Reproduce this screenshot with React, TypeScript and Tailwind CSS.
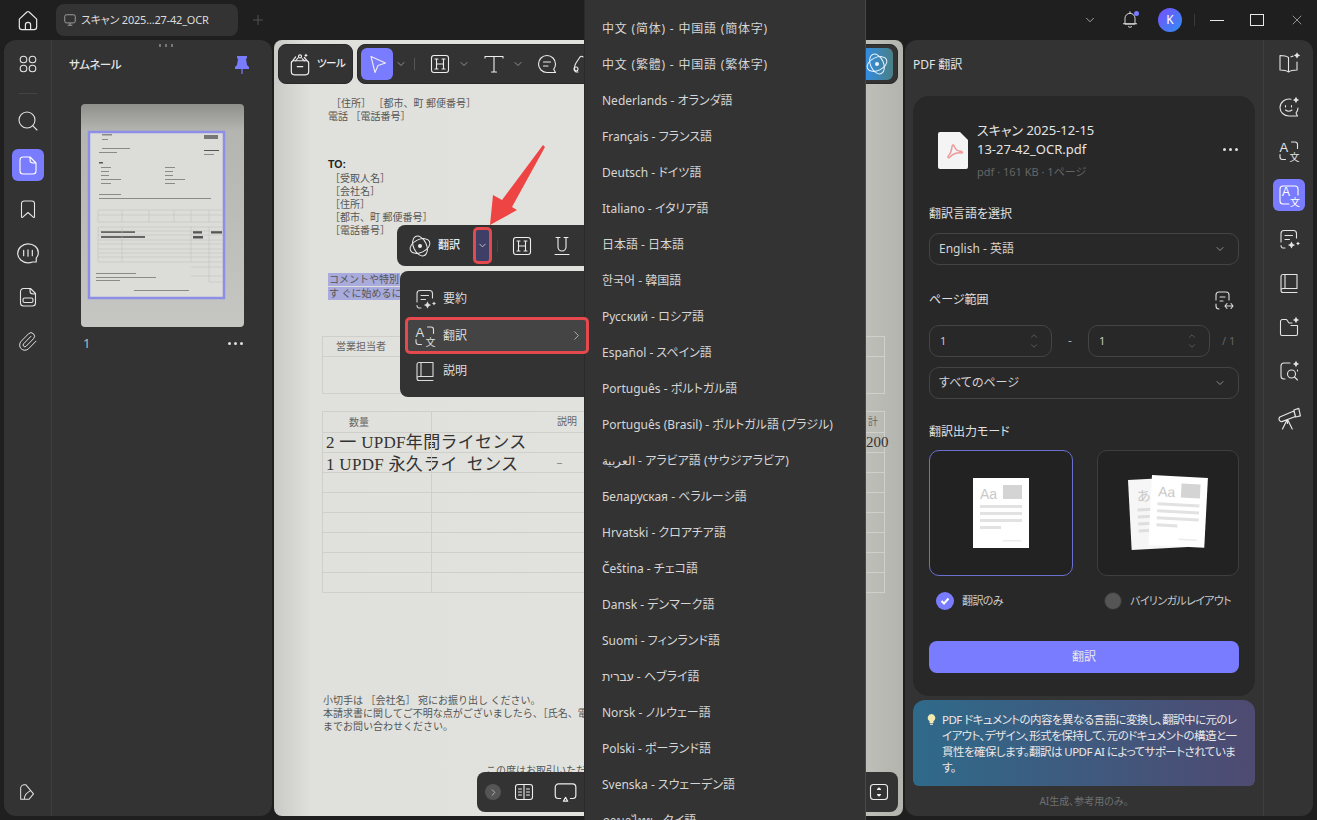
import type { ReactNode } from 'react';
import { ChevronDown, ChevronRight, ChevronUp, Paperclip, Plus, Search, X } from 'lucide-react';

const languages = [
  '中文 (简体) - 中国語 (簡体字)',
  '中文 (繁體) - 中国語 (繁体字)',
  'Nederlands - オランダ語',
  'Français - フランス語',
  'Deutsch - ドイツ語',
  'Italiano - イタリア語',
  '日本語 - 日本語',
  '한국어 - 韓国語',
  'Русский - ロシア語',
  'Español - スペイン語',
  'Português - ポルトガル語',
  'Português (Brasil) - ポルトガル語 (ブラジル)',
  'العربية - アラビア語 (サウジアラビア)',
  'Беларуская - ベラルーシ語',
  'Hrvatski - クロアチア語',
  'Čeština - チェコ語',
  'Dansk - デンマーク語',
  'Suomi - フィンランド語',
  'עברית - ヘブライ語',
  'Norsk - ノルウェー語',
  'Polski - ポーランド語',
  'Svenska - スウェーデン語',
  'ภาษาไทย - タイ語',
];

const Ic = ({ children, s = 24, className }: { children: ReactNode; s?: number; className?: string }) => (
  <svg width={s} height={s} viewBox="0 0 24 24" fill="none" stroke="currentColor" strokeWidth={1.1} strokeLinecap="round" strokeLinejoin="round" className={className}>
    {children}
  </svg>
);

const Spark = ({ x, y, r = 3 }: { x: number; y: number; r?: number }) => (
  <path d={`M${x} ${y - r}Q${x + r * 0.2} ${y - r * 0.2} ${x + r} ${y}Q${x + r * 0.2} ${y + r * 0.2} ${x} ${y + r}Q${x - r * 0.2} ${y + r * 0.2} ${x - r} ${y}Q${x - r * 0.2} ${y - r * 0.2} ${x} ${y - r}Z`} fill="currentColor" stroke="none" />
);

const HomeIcon = () => <Ic s={26}><path d="M4 11.2 11 4.6a1.5 1.5 0 0 1 2 0l7 6.6v7.3a2.4 2.4 0 0 1-2.4 2.4H6.4A2.4 2.4 0 0 1 4 18.5ZM9.6 20.9v-4.3a2.4 2.4 0 0 1 4.8 0v4.3" /></Ic>;
const GridIcon = () => <Ic><circle cx="7.5" cy="7.5" r="3.3" /><circle cx="16.5" cy="7.5" r="3.3" /><circle cx="7.5" cy="16.5" r="3.3" /><circle cx="16.5" cy="16.5" r="3.3" /></Ic>;
const PageIcon = () => <Ic><path d="M7 4h7l6 6v8a3 3 0 0 1-3 3H7a3 3 0 0 1-3-3V7a3 3 0 0 1 3-3ZM14 4v3a3 3 0 0 0 3 3h3" /></Ic>;
const BookmarkIcon = () => <Ic><path d="M5.5 6.5A2.5 2.5 0 0 1 8 4h8a2.5 2.5 0 0 1 2.5 2.5V20a.6.6 0 0 1-1 .4L12 15.5l-5.5 4.9a.6.6 0 0 1-1-.4Z" /></Ic>;
const ChatBarsIcon = () => <Ic s={26}><path d="M12 3.5c5.2 0 9.5 3.5 9.5 8.2 0 1.9-.7 3.7-1.9 5v3.6h-3.4a11 11 0 0 1-4.2.8c-5.2 0-9.5-4-9.5-8.7S6.8 3.5 12 3.5Z" /><path d="M8 9.5v5M12 9v6M16 9.5v5" /></Ic>;
const FilePillIcon = () => <Ic><path d="M7.5 3.5h7l5 5V18a3 3 0 0 1-3 3H7.500a3 3 0 0 1-3-3V6.500a3 3 0 0 1 3-3ZM14 3.500V6a3 3 0 0 0 3 3h2.500" /><rect x="7" y="13" width="10" height="4.500" rx="1.500" /></Ic>;
const TuneIcon = () => <Ic><path d="M4 12V7a3 3 0 0 1 3-3h7a3 3 0 0 1 3 3v5M4 16v2a3 3 0 0 0 3 3M8 9h5M8 13h3" /><path d="M13 18h8M15 15.500 13 18l2 2.500M19 15.500l2 2.500-2 2.500" /></Ic>;

const TranslateIcon = ({ s = 24 }: { s?: number }) => (
  <svg width={s} height={s} viewBox="0 0 24 24" fill="none" stroke="currentColor" strokeWidth={1.1} strokeLinecap="round">
    <text x="2.5" y="12.5" fontSize="13" fill="currentColor" stroke="none" fontFamily="Liberation Sans">A</text>
    <text x="12.5" y="22" fontSize="10" fill="currentColor" stroke="none" fontFamily="Noto Sans CJK JP">文</text>
    <path d="M14.5 3H18a2.5 2.5 0 0 1 2.5 2.500v4M3 15.500V18a2.500 2.500 0 0 0 2.500 2.500h3" />
  </svg>
);
const TranslateBoxIcon = () => (
  <svg width="24" height="24" viewBox="0 0 24 24" fill="none" stroke="currentColor" strokeWidth={1.1} strokeLinecap="round">
    <text x="5" y="13" fontSize="12" fill="currentColor" stroke="none" fontFamily="Liberation Sans">A</text>
    <text x="13" y="22.5" fontSize="10" fill="currentColor" stroke="none" fontFamily="Noto Sans CJK JP">文</text>
    <path d="M12 21H6a3 3 0 0 1-3-3V6a3 3 0 0 1 3-3h12a3 3 0 0 1 3 3v6" />
  </svg>
);
const SummaryIcon = () => <Ic><path d="M4 15V6.500A3 3 0 0 1 7 3.500h9.500a3 3 0 0 1 3 3V11M4 18.500A2.500 2.500 0 0 0 6.500 21H8M8 8.500h7.500M8 12.500h4.500" /><Spark x={14.5} y={18} r={3.6} /><Spark x={21} y={16.5} r={2} /></Ic>;
const BookIcon = () => <Ic><path d="M4 5.500A2 2 0 0 1 6 3.500h14v14H6a2 2 0 0 0-2 2ZM4 19.500a2 2 0 0 0 2 2h14M8 3.500v14" /></Ic>;
const ReadSparkIcon = () => <Ic><path d="M11.5 6.500C9.500 5 6.500 4.500 3 4.500V19c3.500 0 6.500.5 8.500 2 2-1.500 5-2 8.500-2v-8M11.500 6.500V21M14 5.800c.6-.3 1.300-.5 2-.7" /><Spark x={20} y={4.5} r={3.2} /></Ic>;
const ChatSmileIcon = () => <Ic><path d="M14 4.200A9 9 0 0 0 3 12.500C3 17.200 7 21 12 21h8.500L19 18a8 8 0 0 0 2-5" /><path d="M8.500 10.500V12M14.500 10.500V12M8.500 15c2 1.500 4.500 1.500 6.500 0" /><Spark x={19} y={5} r={3.2} /></Ic>;
const FolderSparkIcon = () => <Ic><path d="M3.500 10.500v-4a2 2 0 0 1 2-2h4L12 8h3M3.500 10.500V19A1.500 1.500 0 0 0 5 20.500h14a1.500 1.500 0 0 0 1.500-1.500v-8.500H14" /><Spark x={19} y={5} r={3.2} /></Ic>;
const SearchSparkIcon = () => <Ic><path d="M13 4H7a3 3 0 0 0-3 3v10a3 3 0 0 0 3 3h1M20.500 11v1" /><circle cx="14.5" cy="15" r="4" /><path d="m17.500 18 3 3" /><Spark x={19} y={5} r={3.2} /></Ic>;
const TelescopeIcon = () => <Ic s={26} className="translate-y-[2px]"><path d="M3.500 12 16.500 6.500l1.500 5L6 16a2.400 2.400 0 0 1-2.500-4ZM16.500 5.500l4.500-1.500 1.500 7-4.500 1ZM10 15l-4 8M11 15l4 8M10.500 15v3" /></Ic>;
const CursorIcon = () => <Ic><path d="M6 4.500 20.500 11 13 13.500 10 20.500Z" /></Ic>;
const HBoxIcon = () => <Ic><rect x="3.500" y="3.500" width="17" height="17" rx="2.500" /><path d="M7 7h3M14 7h3M7 17h3M14 17h3M8.500 7v10M15.500 7v10M8.500 12h7" /></Ic>;
const TIcon = () => <Ic><path d="M3 6V4.500h18V6M12 4.500V20M9.500 20h5" /></Ic>;
const UIcon = () => <Ic><path d="M6 3.500h4M14 3.500h4M8 3.500V13a4 4 0 0 0 8 0V3.500M5 20.500h14" /></Ic>;
const BubbleIcon = () => <Ic><path d="M20.500 20.500H12a8.500 8.500 0 1 1 8.500-8.500c0 2-.7 3.800-1.800 5.200ZM8.500 10h7M8.500 14h4.500" /></Ic>;
const LassoIcon = () => <Ic><path d="M5 20c-2-2-2-6 0-9l4-6c1-1 2-1 3 0M5 20h2" /><circle cx="5" cy="17" r="2" /></Ic>;
const ToolsIcon = () => <Ic s={26}><path d="M4 11a2 2 0 0 1 2-2h12a2 2 0 0 1 2 2v8a3 3 0 0 1-3 3H7a3 3 0 0 1-3-3ZM9.500 14.500h5M4.500 10 8 5.500M19.500 10 16 6" /><circle cx="12" cy="5" r="1.4" /><Spark x={17.5} y={4} r={1.8} /><path d="m8 9 2-2.500M14 7l2 2" /></Ic>;
const OrbitIcon = ({ s = 24 }: { s?: number }) => (
  <svg width={s} height={s} viewBox="0 0 24 24" fill="none" stroke="currentColor" strokeWidth={1}>
    <ellipse cx="12" cy="12" rx="10.500" ry="6.500" transform="rotate(-25 12 12)" />
    <ellipse cx="12" cy="12" rx="6.500" ry="10.500" transform="rotate(-25 12 12)" />
    <circle cx="12" cy="12" r="2" fill="currentColor" stroke="none" />
  </svg>
);
const SplitBookIcon = () => <Ic><rect x="3.500" y="4.500" width="17" height="15" rx="2.500" /><path d="M12 4.500v15M6.500 9h3M6.500 12h3M6.500 15h3M14.500 9h3M14.500 12h3M14.500 15h3" /></Ic>;
const MonitorIcon = () => <Ic s={26}><path d="M8 18H6a3 3 0 0 1-3-3V7.500a3 3 0 0 1 3-3h13a3 3 0 0 1 3 3V15a3 3 0 0 1-3 3h-2" /><path d="m12.500 17 2 3.500h-4Z" /></Ic>;
const FitIcon = () => <Ic><rect x="3.500" y="4.500" width="17" height="15" rx="3" /><path d="M10.500 9.500 12 8l1.500 1.500ZM10.500 14.500 12 16l1.500-1.500Z" fill="currentColor" /></Ic>;

const Dots = ({ className = '' }: { className?: string }) => (
  <div className={`flex gap-[3px] ${className}`}>
    <span className="h-[3px] w-[3px] rounded-full bg-[#e0e0e0]" />
    <span className="h-[3px] w-[3px] rounded-full bg-[#e0e0e0]" />
    <span className="h-[3px] w-[3px] rounded-full bg-[#e0e0e0]" />
  </div>
);

const Chev = () => <ChevronDown size={12} strokeWidth={1.5} className="text-[#b0b0b0]" />;

const RailBtn = ({ children, active }: { children: ReactNode; active?: boolean }) => (
  <div className={`flex h-8 w-8 items-center justify-center rounded-md ${active ? 'bg-[#7a7cff] text-white' : 'text-[#e4e4e4]'}`}>{children}</div>
);

const Stepper = ({ className }: { className: string }) => (
  <div className={`flex h-8 items-center justify-between rounded-[10px] border border-[#444] pl-[10px] pr-3 text-[11px] text-[#c8c8c8] ${className}`}>
    <span>1</span>
    <div className="flex flex-col text-[#777]">
      <ChevronUp size={10} strokeWidth={1.5} />
      <ChevronDown size={10} strokeWidth={1.5} />
    </div>
  </div>
);

const SelectBox = ({ label }: { label: string }) => (
  <div className="flex h-8 items-center justify-between rounded-[10px] border border-[#444] pl-[9px] pr-3 text-[12px] text-[#d4d4d4]">
    <span>{label}</span>
    <Chev />
  </div>
);

const Thumbnail = () => (
  <svg width="163" height="223" viewBox="0 0 163 223" className="rounded-sm">
    <defs>
      <linearGradient id="paper" x1="0" y1="0" x2="0" y2="1">
        <stop offset="0" stopColor="#8f8f8c" />
        <stop offset="0.12" stopColor="#b4b5b0" />
        <stop offset="1" stopColor="#c6c7c2" />
      </linearGradient>
    </defs>
    <rect width="163" height="223" rx="2" fill="url(#paper)" />
    <rect x="8" y="28" width="135" height="166" fill="#dcddd8" stroke="#8d8fe6" strokeWidth="2.5" />
    <g fill="#8a8a88">
      <rect x="21" y="30" width="10" height="1.500" /><rect x="21" y="35" width="6" height="1" />
      <rect x="21" y="44" width="28" height="1" /><rect x="18" y="48" width="18" height="1" />
      <rect x="123" y="31" width="14" height="4" fill="#777" />
      <rect x="123" y="46" width="15" height="1" fill="#555" /><rect x="123" y="50" width="10" height="1" />
      <rect x="18" y="58" width="4" height="1.500" fill="#555" />
      <rect x="20" y="63" width="10" height="1" /><rect x="20" y="67" width="8" height="1" /><rect x="20" y="71" width="8" height="1" /><rect x="20" y="75" width="20" height="1" /><rect x="20" y="79" width="10" height="1" />
      <rect x="84" y="63" width="10" height="1" /><rect x="84" y="67" width="8" height="1" /><rect x="84" y="71" width="8" height="1" /><rect x="84" y="75" width="20" height="1" /><rect x="84" y="79" width="10" height="1" />
      <rect x="18" y="90" width="22" height="1" /><rect x="18" y="94" width="112" height="1" />
      <rect x="20" y="127" width="34" height="2" fill="#666" /><rect x="20" y="132" width="44" height="2" fill="#666" />
      <rect x="112" y="127" width="9" height="2.500" fill="#555" /><rect x="130" y="127" width="11" height="2.500" fill="#555" /><rect x="112" y="132" width="10" height="2.500" fill="#555" />
      <rect x="15" y="169" width="40" height="1" /><rect x="15" y="173" width="60" height="1" /><rect x="15" y="176" width="24" height="1" />
      <rect x="53" y="186" width="55" height="1" />
    </g>
    <g stroke="#bcbdb8" strokeWidth="0.5" fill="none">
      <path d="M17 106h125M17 111h125M17 118h125M17 106v12M41 106v12M68 106v12M93 106v12M110 106v12M128 106v12" />
      <path d="M17 123h125M17 127h125M17 131h125M17 136h125M17 140h125M17 145h125M17 149h125M17 153h125M17 158h125M17 123v35M41 123v35M110 123v35M128 123v55M110 163h32M110 172h32M128 178h14" />
    </g>
  </svg>
);

const SinglePage = () => (
  <svg width="56" height="70" viewBox="0 0 56 70">
    <rect width="56" height="70" fill="#fff" />
    <text x="7" y="21" fontSize="14" fill="#c9c9c9" fontFamily="Liberation Sans">Aa</text>
    <rect x="30" y="7" width="19" height="14" fill="#d4d4d4" />
    <rect x="7" y="27" width="42" height="3" fill="#e2e2e2" /><rect x="7" y="34" width="42" height="3" fill="#e2e2e2" /><rect x="7" y="41" width="42" height="3" fill="#e2e2e2" /><rect x="7" y="48" width="21" height="3" fill="#e2e2e2" />
    <rect x="30" y="62" width="18" height="1.500" fill="#ececec" />
  </svg>
);

const DoublePage = () => (
  <svg width="84" height="78" viewBox="0 0 84 78">
    <g transform="translate(2 6) rotate(-3)">
      <rect width="56" height="70" fill="#f6f6f6" />
      <text x="8" y="22" fontSize="14" fill="#c9c9c9" fontFamily="Noto Sans CJK JP">あ</text>
      <rect x="8" y="29" width="24" height="3" fill="#dedede" /><rect x="8" y="36" width="24" height="3" fill="#dedede" /><rect x="8" y="43" width="24" height="3" fill="#dedede" /><rect x="8" y="50" width="14" height="3" fill="#dedede" />
    </g>
    <g transform="translate(26 1) rotate(3)">
      <rect width="56" height="70" fill="#fff" />
      <text x="7" y="21" fontSize="14" fill="#c9c9c9" fontFamily="Liberation Sans">Aa</text>
      <rect x="30" y="7" width="19" height="14" fill="#d4d4d4" />
      <rect x="7" y="27" width="42" height="3" fill="#e2e2e2" /><rect x="7" y="34" width="42" height="3" fill="#e2e2e2" /><rect x="7" y="41" width="42" height="3" fill="#e2e2e2" /><rect x="7" y="48" width="21" height="3" fill="#e2e2e2" />
      <rect x="30" y="62" width="18" height="1.500" fill="#ececec" />
    </g>
  </svg>
);

const tableRows = [0, 1, 2, 3, 4, 5];

const Page = () => (
  <div className="h-full overflow-hidden rounded-lg bg-[linear-gradient(90deg,#c9cac5_0%,#e0e1dc_6%,#e2e3de_80%,#bdbdb8_95%,#b4b4af_100%)] pl-[54px] pt-[57px] font-['Liberation_Serif','Noto_Sans_CJK_JP',serif] text-[10px] leading-[13px] text-[#555] [font-feature-settings:normal]">
    <div className="pl-[3px]">［住所］ ［都市、町 郵便番号］</div>
    <div>電話 ［電話番号］</div>
    <div className="mt-[35px] font-['Liberation_Sans'] text-[10.5px] font-bold text-[#222]">TO:</div>
    <div className="mt-[1px] pl-[2px]">
      <div>［受取人名］</div>
      <div>［会社名］</div>
      <div>［住所］</div>
      <div>［都市、町 郵便番号］</div>
      <div>［電話番号］</div>
    </div>
    <div className="mt-[36px] w-[72px] whitespace-nowrap bg-[#a9abdc] pl-[1px]">コメントや特別</div>
    <div className="mt-[1px] w-[72px] whitespace-nowrap bg-[#a9abdc] pl-[1px]">す ぐに始めるに</div>

    <div className="-ml-[6px] mt-[36px] w-[563px] border border-[#cfd0cb]">
      <div className="grid h-[20px] grid-cols-[108px_117px_113px_82px_79px_64px] items-center border-b border-[#cfd0cb]">
        <div className="pl-[13px] text-[#666]">営業担当者</div>
        <div className="h-full border-l border-[#cfd0cb]" />
        <div className="h-full border-l border-[#cfd0cb]" />
        <div className="h-full border-l border-[#cfd0cb]" />
        <div className="h-full border-l border-[#cfd0cb]" />
        <div className="h-full border-l border-[#cfd0cb]" />
      </div>
      <div className="h-[36px]" />
    </div>

    <div className="-ml-[6px] mt-[17px] w-[563px] border-x border-t border-[#cfd0cb]">
      <div className="grid h-[21px] grid-cols-[108px_135px_174px_81px_64px] items-center border-b border-[#cfd0cb]">
        <div className="pl-[26px] text-[#666]">数量</div>
        <div className="h-full whitespace-nowrap border-l border-[#cfd0cb] pl-[125px] pt-[3px] text-[#666]">説明</div>
        <div className="h-full" />
        <div className="h-full border-l border-[#cfd0cb]" />
        <div className="h-full border-l border-[#cfd0cb] pl-[46px] pt-[3px] text-[#666]">計</div>
      </div>
      <div className="grid h-[20px] grid-cols-[108px_309px_81px_64px] items-center border-b border-[#cfd0cb]">
        <div className="whitespace-nowrap pl-[3px] text-[17px] tracking-[0.3px] text-[#333]">2 一 UPDF年間ライセンス</div>
        <div className="h-full border-l border-[#cfd0cb]" />
        <div className="h-full border-l border-[#cfd0cb]" />
        <div className="h-full border-l border-[#cfd0cb] pl-[44px] pt-[3px] text-[15px] text-[#333]">200</div>
      </div>
      <div className="grid h-[20px] grid-cols-[108px_309px_81px_64px] items-center border-b border-[#cfd0cb]">
        <div className="whitespace-nowrap pl-[3px] pt-[3px] text-[17px] tracking-[0.3px] text-[#333]">1 UPDF 永久ライ &nbsp;センス</div>
        <div className="h-full border-l border-[#cfd0cb] pl-[125px] pt-[3px] text-[#555]">–</div>
        <div className="h-full border-l border-[#cfd0cb]" />
        <div className="h-full border-l border-[#cfd0cb]" />
      </div>
      {tableRows.map((r) => (
        <div key={r} className="grid h-[20px] grid-cols-[108px_309px_81px_64px] border-b border-[#cfd0cb]">
          <div />
          <div className="border-l border-[#cfd0cb]" />
          <div className="border-l border-[#cfd0cb]" />
          <div className="border-l border-[#cfd0cb]" />
        </div>
      ))}
    </div>

    <div className="-ml-[5px] mt-[101px]">
      <div className="whitespace-nowrap">小切手は ［会社名］ 宛にお振り出し ください。</div>
      <div className="whitespace-nowrap">本請求書に関してご不明な点がございましたら、［氏名、電</div>
      <div className="whitespace-nowrap">までお問い合わせください。</div>
    </div>
    <div className="mt-[31px] whitespace-nowrap pl-[158px]">この度はお取引いただ</div>
  </div>
);

export default function App() {
  return (
    <div className="relative h-[820px] w-[1317px] overflow-hidden bg-[#1f1f1f] font-['Noto_Sans','Noto_Sans_CJK_JP',sans-serif] text-[#e0e0e0] [font-feature-settings:'palt']">
      {/* title bar */}
      <div className="flex h-10 items-center">
        <div className="ml-[15px] text-[#e8e8e8]"><HomeIcon /></div>
        <div className="ml-[15px] flex h-8 w-[182px] items-center rounded-lg bg-[#333] pl-[7px] text-[11px] tracking-[-0.2px] text-[#dcdcdc]">
          <svg width="14" height="14" viewBox="0 0 24 24" fill="none" stroke="#aaa" strokeWidth="1.5" className="mr-[4px]"><rect x="3" y="3" width="18" height="14" rx="3" /><path d="M12 17v4M8 21h8" /></svg>
          スキャン 2025...27-42_OCR
        </div>
        <Plus size={16} strokeWidth={1} className="ml-[12px] text-[#6a6a6a]" />
        <div className="ml-auto flex items-center">
          <ChevronDown size={14} strokeWidth={1.2} className="text-[#ddd]" />
          <div className="relative ml-[23px] text-[#e8e8e8]">
            <Ic s={20}><path d="M6 16.500V10a6 6 0 0 1 12 0v6.500ZM4 16.500h16M10 20c1 1 3 1 4 0M12 2v2" /></Ic>
            <span className="absolute right-[1px] top-[1px] h-[5px] w-[5px] rounded-full bg-[#7a7cff]" />
          </div>
          <div className="ml-[18px] flex h-6 w-6 items-center justify-center rounded-full bg-[linear-gradient(135deg,#7a4dff,#2f8ff0)] text-[12px] text-white">K</div>
          <span className="ml-[12px] h-3 w-px bg-[#3a3a3a]" />
          <span className="ml-[15px] h-px w-[14px] bg-[#e8e8e8]" />
          <span className="ml-[26px] h-[12px] w-[14px] border border-[#e8e8e8]" />
          <X size={16} strokeWidth={1} className="ml-[25px] mr-[12px] text-[#ccc]" />
        </div>
      </div>

      {/* main */}
      <div className="flex h-[776px] gap-[2px] px-1">
        <div className="flex w-[268px] rounded-xl bg-[#333]">
          <div className="flex w-[48px] flex-col items-center border-r border-[#3e3e3e] pt-[8px]">
            <RailBtn><GridIcon /></RailBtn>
            <span className="mb-[11px] mt-[13px] h-px w-[18px] bg-[#444]" />
            <div className="flex flex-col gap-3 text-[#e4e4e4]">
              <RailBtn><Search size={24} strokeWidth={1.1} /></RailBtn>
              <RailBtn active><PageIcon /></RailBtn>
              <RailBtn><BookmarkIcon /></RailBtn>
              <RailBtn><ChatBarsIcon /></RailBtn>
              <RailBtn><FilePillIcon /></RailBtn>
              <RailBtn><Paperclip size={21} strokeWidth={1.1} /></RailBtn>
            </div>
            <div className="mb-[8px] mt-auto">
              <RailBtn>
                <Ic s={22}><path d="M4 20V8a4 4 0 0 1 4-4h1.500L18 14l-5 6H4ZM8 20c0-4 2-7 6-9" /></Ic>
              </RailBtn>
            </div>
          </div>
          <div className="relative flex-1">
            <div className="absolute left-[107px] top-[4px] flex gap-[4px]">
              <span className="h-[3px] w-[2px] bg-[#777]" /><span className="h-[3px] w-[2px] bg-[#777]" /><span className="h-[3px] w-[2px] bg-[#777]" />
            </div>
            <div className="flex items-center justify-between pl-[17px] pr-[22px] pt-[15px] text-[11.5px] font-medium tracking-[-0.5px] text-[#e4e4e4]">
              <span>サムネール</span>
              <svg width="16" height="20" viewBox="0 0 16 20" fill="#7a7cff">
                <path d="M3 1h10v2l-1 1 1 6 2 2v2H1v-2l2-2 1-6-1-1Z" />
                <rect x="7.4" y="13" width="1.2" height="6" />
              </svg>
            </div>
            <div className="ml-[29px] mt-[29px]"><Thumbnail /></div>
            <div className="ml-[31px] mr-[29px] mt-[7px] flex items-center justify-between text-[13px] text-[#bbb]">
              <span>1</span>
              <Dots />
            </div>
          </div>
        </div>

        <div className="w-[629px]"><Page /></div>

        <div className="flex w-[408px] rounded-xl bg-[#333]">
          <div className="w-[359px] border-r border-[#3e3e3e] px-2">
            <div className="h-[56px] pt-[16px] text-[12px] text-[#e4e4e4]">PDF 翻訳</div>
            <div className="h-[600px] rounded-2xl bg-[#282828] px-4">
              <div className="flex items-start pl-[9px] pt-[25px]">
                <svg width="30" height="37" viewBox="0 0 30 37" className="mt-[11px]">
                  <path d="M2 0h20l8 8v27a2 2 0 0 1-2 2H2a2 2 0 0 1-2-2V2a2 2 0 0 1 2-2Z" fill="#f4f4f4" />
                  <path d="M15 13c-2 0 0 6-4 10-2 2-1 4 1 2 2-3 8-5 11-4 3 0 1-2-2-2-4 0-5-7-6-6Z" fill="none" stroke="#ee9a9a" strokeWidth="1.5" />
                </svg>
                <div className="ml-[9px] flex-1">
                  <div className="text-[13px] leading-[19px] text-[#e4e4e4]">スキャン 2025-12-15<br />13-27-42_OCR.pdf</div>
                  <div className="mt-[5px] text-[11px] leading-[15px] text-[#666]">pdf · 161 KB · 1ページ</div>
                </div>
                <Dots className="mr-[1px] mt-[27px]" />
              </div>
              <div className="mt-[27px] text-[12px] leading-[16px] text-[#e0e0e0]">翻訳言語を選択</div>
              <div className="mt-[11px]"><SelectBox label="English - 英語" /></div>
              <div className="mt-[23px] flex items-center justify-between pr-[3px] text-[12px] leading-[20px] text-[#e0e0e0]">
                <span>ページ範囲</span>
                <TuneIconSmall />
              </div>
              <div className="mt-[13px] flex items-center">
                <Stepper className="w-[123px]" />
                <span className="w-[36px] text-center text-[12px] text-[#aaa]">-</span>
                <Stepper className="w-[122px]" />
                <span className="ml-[12px] text-[11px] text-[#666]">/ 1</span>
              </div>
              <div className="mt-[10px]"><SelectBox label="すべてのページ" /></div>
              <div className="mt-[23px] text-[12px] leading-[20px] text-[#e0e0e0]">翻訳出力モード</div>
              <div className="mt-[8px] flex gap-[24px]">
                <div className="flex h-[126px] w-[144px] items-center justify-center rounded-[10px] border border-[#6a6fd0] bg-[#222]"><SinglePage /></div>
                <div className="flex h-[126px] w-[143px] items-center justify-center rounded-[10px] border border-[#3e3e3e] bg-[#222]"><DoublePage /></div>
              </div>
              <div className="mt-[16px] flex h-[18px] items-center whitespace-nowrap text-[11px] tracking-[-0.6px] text-[#c8c8c8]">
                <div className="ml-[7px] flex h-[18px] w-[18px] shrink-0 items-center justify-center rounded-full bg-[#7a7cff]">
                  <svg width="12" height="12" viewBox="0 0 12 12" fill="none" stroke="#fff" strokeWidth="2"><path d="m2.5 6 2.500 2.500 4.500-5" /></svg>
                </div>
                <span className="ml-[8px] w-[48px]">翻訳のみ</span>
                <div className="ml-[94px] h-[18px] w-[18px] shrink-0 rounded-full border border-[#333] bg-[#555]" />
                <span className="ml-[8px]">バイリンガルレイアウト</span>
              </div>
              <div className="mt-[31px] flex h-8 items-center justify-center rounded-lg bg-[#7a7cff] text-[12px] text-[#e8e8e8]">翻訳</div>
            </div>
            <div className="mt-[4px] flex h-[86px] rounded-b-md rounded-t-xl bg-[linear-gradient(90deg,#2f6a8a,#4f4a72)] pl-[14px] pt-[12px] text-[11.5px] leading-[16px] tracking-[-0.55px] text-[#e8e8e8]">
              <svg width="9" height="14" viewBox="0 0 9 14" className="mr-[6px] mt-[1px] shrink-0">
                <path d="M4.5 1a3.800 3.800 0 0 0-2 7v2h4V8a3.800 3.800 0 0 0-2-7Z" fill="#f2e9b0" />
                <rect x="3" y="10.5" width="3" height="1.5" fill="#ccc" />
              </svg>
              <p className="whitespace-nowrap">PDF ドキュメントの内容を異なる言語に変換し、翻訳中に元のレ<br />イアウト、デザイン、形式を保持して、元のドキュメントの構造と一<br />貫性を確保します。翻訳は UPDF AI によってサポートされていま<br />す。</p>
            </div>
            <div className="mt-[8px] text-center text-[10px] leading-[14px] text-[#707070]">AI生成、参考用のみ。</div>
          </div>
          <div className="flex flex-1 flex-col items-center gap-3 pt-[7px]">
            <RailBtn><ReadSparkIcon /></RailBtn>
            <RailBtn><ChatSmileIcon /></RailBtn>
            <RailBtn><TranslateIcon /></RailBtn>
            <RailBtn active><TranslateBoxIcon /></RailBtn>
            <RailBtn><SummaryIcon /></RailBtn>
            <RailBtn><BookIcon /></RailBtn>
            <RailBtn><FolderSparkIcon /></RailBtn>
            <RailBtn><SearchSparkIcon /></RailBtn>
            <RailBtn><TelescopeIcon /></RailBtn>
          </div>
        </div>
      </div>

      {/* floating toolbars over the page */}
      <div className="absolute left-[278px] top-[44px] flex h-10 w-[75px] items-center rounded-lg border border-[#2a2a2a] bg-[#333] pl-[8px] text-[10.5px] font-medium tracking-[-0.5px] text-[#eee]">
        <ToolsIcon />
        <span className="ml-[4px]">ツール</span>
      </div>
      <div className="absolute left-[357px] top-[44px] flex h-10 w-[541px] items-center rounded-lg border border-[#2a2a2a] bg-[#333] pl-[3px] text-[#eee]">
        <div className="flex h-8 w-8 items-center justify-center rounded-md bg-[#7a7cff]"><CursorIcon /></div>
        <div className="ml-[2px]"><Chev /></div>
        <span className="ml-[7px] h-3 w-px bg-[#555]" />
        <div className="ml-[13px]"><HBoxIcon /></div>
        <div className="ml-[6px]"><Chev /></div>
        <div className="ml-[12px]"><TIcon /></div>
        <div className="ml-[6px]"><Chev /></div>
        <div className="ml-[11px]"><BubbleIcon /></div>
        <div className="ml-[12px]"><LassoIcon /></div>
        <div className="ml-auto mr-[4px] flex h-8 w-8 items-center justify-center rounded-md bg-[linear-gradient(90deg,#2f8ff0,#4a7f85)] text-[#e8f4ff]"><OrbitIcon /></div>
      </div>
      <div className="absolute left-[477px] top-[772px] flex h-10 w-[421px] items-center rounded-lg bg-[#333] pl-[8px] text-[#eee]">
        <div className="flex h-4 w-4 items-center justify-center rounded-full bg-[#555] text-[#bbb]"><ChevronRight size={11} /></div>
        <div className="ml-[11px]"><SplitBookIcon /></div>
        <div className="ml-[16px]"><MonitorIcon /></div>
        <div className="ml-auto mr-[7px]"><FitIcon /></div>
      </div>

      {/* selection toolbar + menu */}
      <div className="absolute left-[397px] top-[225px] flex h-[41px] w-[200px] items-center rounded-lg bg-[#333] pl-[11px] text-[11px] font-medium text-[#eee]">
        <OrbitIcon />
        <span className="ml-[6px]">翻訳</span>
        <div className="ml-[13px] flex h-[37px] w-[19px] items-center justify-center rounded-[5px] border-[3px] border-[#e5484d] bg-[#3d3f66] text-[#ccc]"><ChevronDown size={11} /></div>
        <span className="ml-[5px] h-3 w-px bg-[#444]" />
        <div className="ml-[12px]"><HBoxIcon /></div>
        <div className="ml-[16px]"><UIcon /></div>
      </div>
      <div className="absolute left-[400px] top-[271px] flex h-[126px] w-[200px] flex-col justify-center rounded-lg bg-[#333] pt-[1px] text-[12px] text-[#ddd]">
        <div className="flex h-9 items-center gap-[6px] pl-[13px]"><SummaryIcon /><span>要約</span></div>
        <div className="h-9" />
        <div className="flex h-9 items-center gap-[6px] pl-[13px]"><BookIcon /><span>説明</span></div>
      </div>

      {/* language list */}
      <div className="absolute left-[585px] top-0 h-[820px] w-[281px] overflow-hidden border-r border-[#484848] bg-[#333] pt-[11px] text-[12px] text-[#d6d6d6] shadow-[-1px_0_0_#2a2a2a]">
        {languages.map((l, i) => (
          <div key={l} dir="ltr" className={`flex h-9 items-center whitespace-nowrap pl-[17px] ${i < 2 ? 'tracking-[0.8px]' : ''}`}>{l}</div>
        ))}
      </div>

      {/* annotations */}
      <div className="absolute left-[405px] top-[317px] flex h-[37px] w-[184px] items-center justify-between rounded-[5px] border-[3px] border-[#e5484d] bg-[#444] pl-[5px] pr-[2px] text-[#ccc]">
        <div className="flex items-center gap-[6px] text-[12px] text-[#ddd]"><TranslateIcon /><span>翻訳</span></div>
        <ChevronRight size={15} strokeWidth={1.2} />
      </div>
      <svg width="70" height="90" viewBox="0 0 70 90" className="absolute left-[482px] top-[140px]">
        <path d="M8 85 35 70 30 67 63 7 61 5 20 60 11 55Z" fill="#ef4444" />
      </svg>
    </div>
  );
}

function TuneIconSmall() {
  return <div className="text-[#ddd]"><TuneIcon /></div>;
}
